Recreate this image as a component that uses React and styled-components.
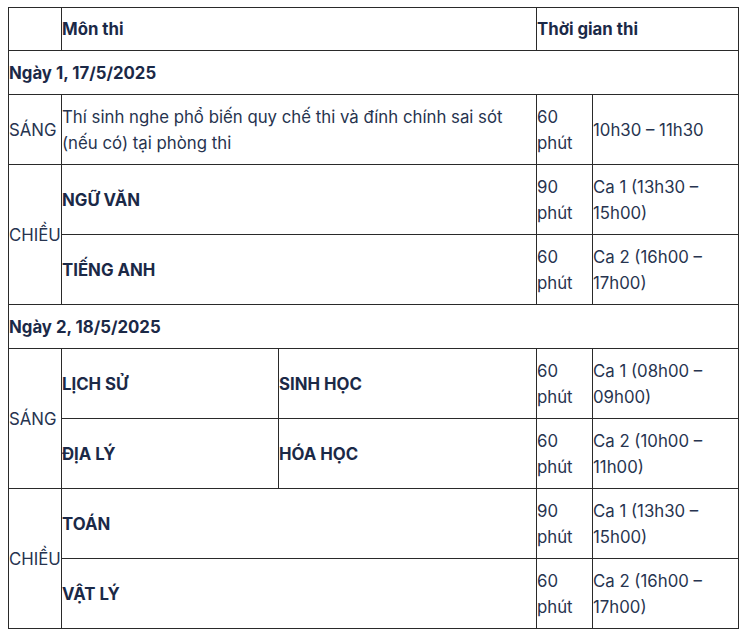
import React from "react";
import styled, { createGlobalStyle } from "styled-components";

const Global = createGlobalStyle`
  html, body { margin: 0; padding: 0; background: #ffffff; }
  body { font-family: Inter, "Noto Sans", sans-serif; }
`;

const Page = styled.div`
  padding: 7px 0 0 8px;
`;

const Table = styled.table`
  border-collapse: collapse;
  table-layout: fixed;
  width: 730px;
  font-family: Inter, "Noto Sans", sans-serif;
  font-size: 16.8px;
  line-height: 26px;
  color: #1e2c4b;
`;

const Cell = styled.td`
  border: 1px solid #2a2a2a;
  padding: 8px 0 8px 0;
  vertical-align: middle;
  text-align: left;
  font-weight: ${(p) => (p.$bold ? 700 : 400)};
  color: ${(p) => (p.$bold ? "#1b2947" : "#27344f")};
  height: ${(p) => (p.$tall ? "53px" : p.$day ? "27px" : "26px")};
`;

const Head = styled(Cell).attrs({ as: "th" })``;

const CHIEU = "CHI\u1EC0U";

export default function App() {
  return (
    <>
      <Global />
      <Page>
        <Table>
          <colgroup>
            <col style={{ width: 53 }} />
            <col style={{ width: 217 }} />
            <col style={{ width: 258 }} />
            <col style={{ width: 56 }} />
            <col style={{ width: 146 }} />
          </colgroup>
          <tbody>
            <tr>
              <Head $bold></Head>
              <Head $bold colSpan={2}>Môn thi</Head>
              <Head $bold colSpan={2}>Thời gian thi</Head>
            </tr>
            <tr>
              <Cell $bold $day colSpan={5}>Ngày 1, 17/5/2025</Cell>
            </tr>
            <tr>
              <Cell $tall>SÁNG</Cell>
              <Cell colSpan={2}>
                Thí sinh nghe phổ biến quy chế thi và đính chính sai sót (nếu có) tại phòng thi
              </Cell>
              <Cell>60 phút</Cell>
              <Cell>10h30 – 11h30</Cell>
            </tr>
            <tr>
              <Cell rowSpan={2}>{CHIEU}</Cell>
              <Cell $bold $tall colSpan={2}>NGỮ VĂN</Cell>
              <Cell>90 phút</Cell>
              <Cell>Ca 1 (13h30 – 15h00)</Cell>
            </tr>
            <tr>
              <Cell $bold $tall colSpan={2}>TIẾNG ANH</Cell>
              <Cell>60 phút</Cell>
              <Cell>Ca 2 (16h00 – 17h00)</Cell>
            </tr>
            <tr>
              <Cell $bold $day colSpan={5}>Ngày 2, 18/5/2025</Cell>
            </tr>
            <tr>
              <Cell rowSpan={2}>SÁNG</Cell>
              <Cell $bold $tall>LỊCH SỬ</Cell>
              <Cell $bold>SINH HỌC</Cell>
              <Cell>60 phút</Cell>
              <Cell>Ca 1 (08h00 – 09h00)</Cell>
            </tr>
            <tr>
              <Cell $bold $tall>ĐỊA LÝ</Cell>
              <Cell $bold>HÓA HỌC</Cell>
              <Cell>60 phút</Cell>
              <Cell>Ca 2 (10h00 – 11h00)</Cell>
            </tr>
            <tr>
              <Cell rowSpan={2}>{CHIEU}</Cell>
              <Cell $bold $tall colSpan={2}>TOÁN</Cell>
              <Cell>90 phút</Cell>
              <Cell>Ca 1 (13h30 – 15h00)</Cell>
            </tr>
            <tr>
              <Cell $bold $tall colSpan={2}>VẬT LÝ</Cell>
              <Cell>60 phút</Cell>
              <Cell>Ca 2 (16h00 – 17h00)</Cell>
            </tr>
          </tbody>
        </Table>
      </Page>
    </>
  );
}
